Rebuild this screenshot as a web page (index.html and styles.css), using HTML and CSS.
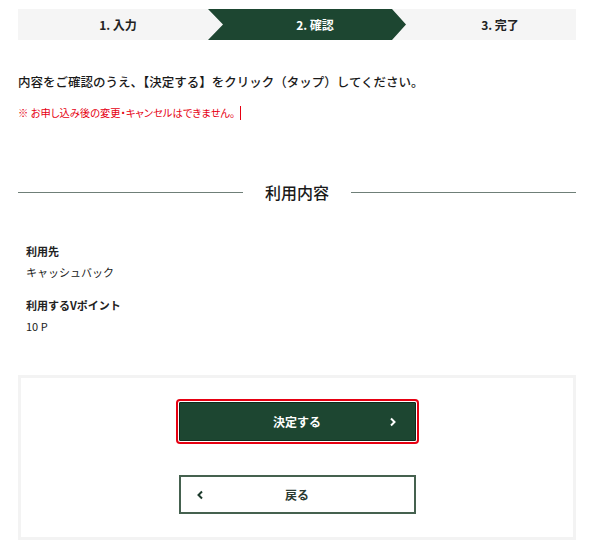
FILE: index.html
```html
<!DOCTYPE html>
<html lang="ja">
<head>
<meta charset="utf-8">
<title>確認</title>
<link rel="stylesheet" href="styles.css">
</head>
<body>
<div class="page">
  <ol class="steps">
    <li class="step step-first">1. 入力</li>
    <li class="step step-current">2. 確認</li>
    <li class="step step-last">3. 完了</li>
  </ol>

  <p class="lead">内容をご確認のうえ、【決定する】をクリック（タップ）してください。</p>
  <p class="note"><span class="note-text">※ お申し込み後の変更・キャンセルはできません。</span></p>

  <h2 class="section-title"><span>利用内容</span></h2>

  <dl class="details">
    <dt>利用先</dt>
    <dd>キャッシュバック</dd>
    <dt>利用するVポイント</dt>
    <dd>10 P</dd>
  </dl>

  <div class="actions">
    <button class="btn btn-primary" type="button">
      <span class="btn-label">決定する</span>
      <svg class="icon icon-next" width="8" height="10" viewBox="0 0 8 10"><polyline points="2,1.5 5.5,5 2,8.5" fill="none" stroke="#fff" stroke-width="2"/></svg>
    </button>
    <button class="btn btn-secondary" type="button">
      <svg class="icon icon-prev" width="8" height="10" viewBox="0 0 8 10"><polyline points="6,1.5 2.5,5 6,8.5" fill="none" stroke="#1d3a2c" stroke-width="2"/></svg>
      <span class="btn-label">戻る</span>
    </button>
  </div>
</div>
</body>
</html>
```

FILE: styles.css
```css
* { box-sizing: border-box; }

html, body {
  margin: 0;
  padding: 0;
  background: #fff;
}

body {
  font-family: "Noto Sans CJK JP", "Noto Sans", sans-serif;
  color: #222;
}

.page {
  width: 558px;
  margin-left: 18px;
  padding-top: 9px;
}

.steps {
  list-style: none;
  margin: 0;
  padding: 0;
  display: grid;
  grid-template-columns: 190px 198px 1fr;
  height: 31px;
  background: #f5f5f5;
}

.step {
  display: flex;
  align-items: center;
  justify-content: center;
  font-size: 12px;
  font-weight: bold;
  color: #222;
}

.step-first { padding-left: 10px; }
.step-last { padding-left: 18px; }

.step-current {
  background: #1d4631;
  color: #fff;
  padding-left: 16px;
  clip-path: polygon(0 0, calc(100% - 14px) 0, 100% 50%, calc(100% - 14px) 100%, 0 100%, 15px 50%);
}

.lead {
  margin: 33px 0 0;
  font-size: 12.5px;
  line-height: 18px;
  font-weight: 500;
  color: #1a1a1a;
}

.note {
  margin: 15px 0 0;
  font-size: 10.3px;
  line-height: 14px;
}

.note-text {
  display: inline-block;
  color: #e60012;
  font-feature-settings: "palt";
  padding-right: 5px;
  border-right: 1px solid #e60012;
}

.section-title {
  margin: 60px 0 0;
  display: flex;
  align-items: center;
  gap: 22px;
  font-size: 16px;
  line-height: 24px;
  font-weight: 500;
  color: #1a1a1a;
}

.section-title::before,
.section-title::after {
  content: "";
  flex: 1;
  height: 1px;
  background: #6f7f78;
}

.details {
  margin: 39px 0 0;
  padding-left: 8px;
  font-size: 11px;
  line-height: 16px;
}

.details dt {
  font-weight: bold;
  margin: 17px 0 0;
}

.details dt:first-child { margin-top: 0; }

.details dd {
  margin: 5px 0 0;
}

.actions {
  margin-top: 41px;
  border: 3px solid #f3f3f3;
  display: flex;
  flex-direction: column;
  align-items: center;
  gap: 34px;
  padding: 24px 0 23px;
}

.btn {
  width: 237px;
  height: 39px;
  display: flex;
  align-items: center;
  justify-content: center;
  position: relative;
  font-family: inherit;
  font-size: 12px;
  font-weight: bold;
  padding: 0;
  cursor: pointer;
}

.btn-primary {
  background: #1d4631;
  color: #fff;
  border: 1px solid #102a1d;
  outline: 2px solid #e60012;
  outline-offset: 1px;
  border-radius: 1px;
}

.btn-secondary {
  background: #fff;
  color: #2a3a32;
  border: 2px solid #45614f;
}

.icon {
  position: absolute;
  top: 50%;
  margin-top: -5px;
}

.icon-next { right: 18px; }
.icon-prev { left: 15px; }
```
